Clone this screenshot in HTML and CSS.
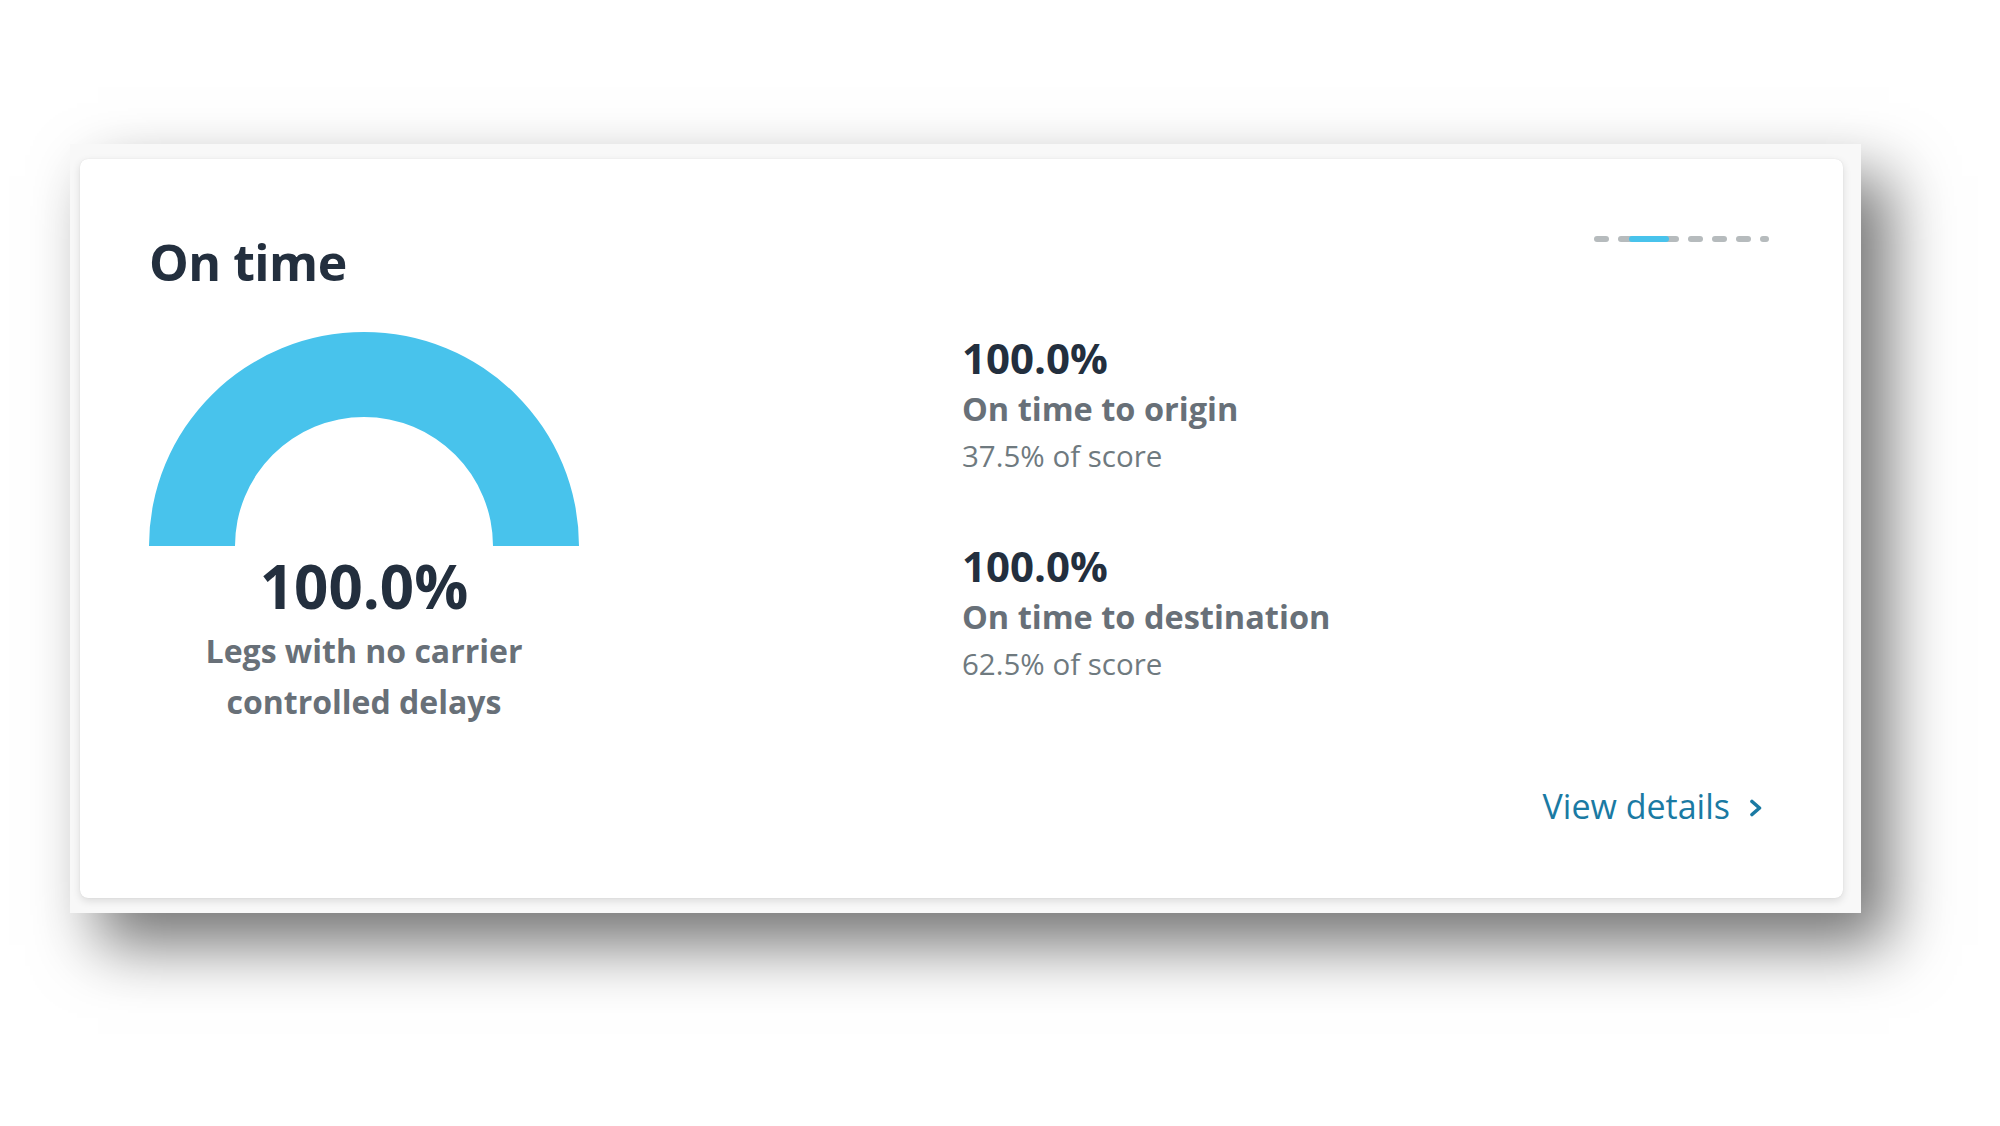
FILE: index.html
```html
<!DOCTYPE html>
<html lang="en">
<head>
<meta charset="utf-8">
<title>On time</title>
<link rel="stylesheet" href="styles.css">
</head>
<body>
<div class="stage">
  <div class="frame">
    <section class="card">
      <header class="card-head">
        <h2 class="title">On time</h2>
        <div class="pager">
          <span class="dash"></span>
          <span class="dash active"><span class="fill"></span></span>
          <span class="dash"></span>
          <span class="dash"></span>
          <span class="dash"></span>
          <span class="dash short"></span>
        </div>
      </header>
      <div class="card-body">
        <div class="gauge-col">
          <svg class="gauge" width="430" height="214" viewBox="0 0 430 214">
            <path d="M0 214 A215 214 0 0 1 430 214 L344 214 A129 129 0 0 0 86 214 Z" fill="#48c3ec"/>
          </svg>
          <div class="big-value">100.0%</div>
          <div class="big-label">Legs with no carrier<br>controlled delays</div>
        </div>
        <div class="metrics">
          <div class="metric">
            <div class="metric-value">100.0%</div>
            <div class="metric-label">On time to origin</div>
            <div class="metric-sub">37.5% of score</div>
          </div>
          <div class="metric">
            <div class="metric-value">100.0%</div>
            <div class="metric-label">On time to destination</div>
            <div class="metric-sub">62.5% of score</div>
          </div>
        </div>
      </div>
      <footer class="card-foot">
        <a class="details" href="#">View details
          <svg class="chev" width="14" height="18" viewBox="0 0 14 18"><polyline points="3,2.5 10.5,9 3,15.5" fill="none" stroke="#1a7aa3" stroke-width="3.6" stroke-linecap="round" stroke-linejoin="round"/></svg>
        </a>
      </footer>
    </section>
  </div>
</div>
</body>
</html>
```

FILE: styles.css
```css
html, body {
  margin: 0;
  padding: 0;
  background: #ffffff;
}
body {
  width: 2000px;
  height: 1126px;
  overflow: hidden;
  font-family: "Open Sans", "Noto Sans", "Liberation Sans", sans-serif;
}
.stage {
  padding: 144px 0 0 70px;
}
.frame {
  width: 1791px;
  height: 769px;
  box-sizing: border-box;
  padding: 15px 18px 15px 10px;
  background: #f8f8f8;
  box-shadow: 28px 32px 60px rgba(0, 0, 0, 0.55);
}
.card {
  height: 100%;
  box-sizing: border-box;
  background: #ffffff;
  border-radius: 8px;
  box-shadow: 0 3px 8px rgba(0, 0, 0, 0.12), 0 0 1px rgba(0, 0, 0, 0.12);
  padding: 73px 74px 0 69px;
  display: flex;
  flex-direction: column;
}
.card-head {
  display: flex;
  justify-content: space-between;
  align-items: flex-start;
}
.title {
  margin: 0;
  font-size: 50px;
  line-height: 60px;
  font-weight: 700;
  color: #232f3e;
  letter-spacing: -0.5px;
}
.pager {
  display: flex;
  gap: 9px;
  margin-top: 4px;
}
.dash {
  display: flex;
  justify-content: center;
  width: 15px;
  height: 6px;
  border-radius: 3px;
  background: #b6bbbd;
}
.dash.active {
  width: 61px;
}
.dash.short {
  width: 9px;
}
.fill {
  width: 40px;
  height: 6px;
  border-radius: 3px;
  background: #48c3ec;
}
.card-body {
  display: grid;
  grid-template-columns: 813px 1fr;
  margin-top: 40px;
}
.gauge-col {
  width: 430px;
  display: flex;
  flex-direction: column;
  align-items: center;
}
.gauge {
  display: block;
}
.big-value {
  margin-top: 5px;
  font-size: 60px;
  line-height: 70px;
  font-weight: 700;
  color: #232f3e;
  letter-spacing: 0;
}
.big-label {
  margin-top: 4px;
  font-size: 32px;
  line-height: 51px;
  font-weight: 700;
  color: #687078;
  text-align: center;
}
.metrics {
  display: flex;
  flex-direction: column;
  gap: 66px;
  padding-top: 2px;
}
.metric {
  display: flex;
  flex-direction: column;
}
.metric-value {
  font-size: 42px;
  line-height: 48px;
  font-weight: 700;
  color: #232f3e;
  letter-spacing: 0;
}
.metric-label {
  margin-top: 5px;
  font-size: 32.5px;
  line-height: 44px;
  font-weight: 700;
  color: #687078;
}
.metric-sub {
  margin-top: 5px;
  font-size: 29.5px;
  line-height: 40px;
  font-weight: 400;
  color: #6f7a7f;
}
.card-foot {
  display: flex;
  justify-content: flex-end;
  margin-top: 59px;
  padding-right: 6px;
}
.details {
  display: flex;
  align-items: center;
  gap: 19px;
  font-size: 34px;
  line-height: 40px;
  color: #1a7aa3;
  text-decoration: none;
}
.chev {
  display: block;
  margin-top: 4px;
}
```
